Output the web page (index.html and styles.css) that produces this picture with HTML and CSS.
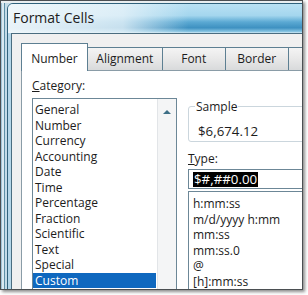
FILE: index.html
```html
<!DOCTYPE html>
<html lang="en">
<head>
    <meta charset="UTF-8">
    <meta name="viewport" content="width=device-width, initial-scale=1.0">
    <title>Format Cells</title>
    <link rel="stylesheet" href="styles.css">
</head>
<body>
    <div class="shot">
        <div class="window">
            <div class="title-bar">Format Cells</div>
            <div class="client">
                <ul class="tabs">
                    <li class="tab active tab-number">Number</li>
                    <li class="tab tab-align">Alignment</li>
                    <li class="tab tab-font">Font</li>
                    <li class="tab tab-border">Border</li>
                    <li class="tab tab-fill"></li>
                </ul>
                <div class="panel">
                    <!-- Category list -->
                    <div class="category">
                        <div class="label"><u>C</u>ategory:</div>
                        <div class="listbox">
                            <ul class="items">
                                <li>General</li>
                                <li>Number</li>
                                <li>Currency</li>
                                <li>Accounting</li>
                                <li>Date</li>
                                <li>Time</li>
                                <li>Percentage</li>
                                <li>Fraction</li>
                                <li>Scientific</li>
                                <li>Text</li>
                                <li>Special</li>
                                <li class="selected">Custom</li>
                            </ul>
                            <div class="scrollbar"><span class="arrow-up"></span></div>
                        </div>
                    </div>

                    <!-- Sample and type -->
                    <div class="format">
                        <fieldset class="sample">
                            <legend>Sample</legend>
                            <div class="sample-value">$6,674.12</div>
                        </fieldset>
                        <div class="label type-label"><u>T</u>ype:</div>
                        <div class="type-input"><span class="selected-text">$#,##0.00</span></div>
                        <ul class="type-list">
                            <li>h:mm:ss</li>
                            <li>m/d/yyyy h:mm</li>
                            <li>mm:ss</li>
                            <li>mm:ss.0</li>
                            <li>@</li>
                            <li>[h]:mm:ss</li>
                        </ul>
                    </div>
                </div>
            </div>
        </div>
    </div>
</body>
</html>
```

FILE: styles.css
```css
/* General */
* {
    box-sizing: border-box;
}

body {
    margin: 0;
    width: 308px;
    height: 295px;
    overflow: hidden;
    background-color: #fff;
    font-family: "Open Sans", "Liberation Sans", sans-serif;
    font-size: 12px;
    color: #1c1c1c;
}

ul {
    list-style: none;
    margin: 0;
    padding: 0;
}

/* Screenshot frame */
.shot {
    width: 303px;
    height: 290px;
    border: 1px solid #4b4f52;
    overflow: hidden;
    box-shadow: 2px 2px 3px rgba(0, 0, 0, 0.45);
    padding: 2px 0 0 6px;
    background:
        linear-gradient(to bottom, #e9eef0 0, #e9eef0 2px, transparent 2px),
        linear-gradient(to right, #9fc3d6 0, #9fc3d6 1px, #d9e9f1 1px, #d9e9f1 3px, #5d8fa6 3px, #5d8fa6 4px, #c3dbe7 4px);
}

/* Dialog window */
.window {
    width: 330px;
    height: 330px;
    border: 1px solid #2f627c;
    border-radius: 6px 6px 0 0;
    padding: 0 3px;
    background-color: #b4d6e8;
    display: flex;
    flex-direction: column;
}

.title-bar {
    height: 29px;
    line-height: 28px;
    margin: 0 -3px;
    padding-left: 5px;
    font-size: 14px;
    color: #202020;
    border-radius: 5px 5px 0 0;
    background:
        linear-gradient(to right, rgba(242, 248, 251, 0.95) 0, rgba(232, 243, 249, 0.8) 35%, rgba(220, 238, 247, 0) 55%),
        linear-gradient(to bottom, #b9e1f3 0, #a4d6ee 40%, #5ba9d3 62%, #3e91c1 82%, #86c4e2 95%, #d3eaf5 100%);
}

.client {
    flex: 1;
    border: 1px solid #4a6d80;
    background-color: #f0f0f0;
    padding: 9px 0 0 9px;
    display: flex;
    flex-direction: column;
}

/* Tabs */
.tabs {
    display: flex;
    align-items: flex-end;
    height: 27px;
}

.tab {
    height: 23px;
    line-height: 21px;
    text-align: center;
    border: 1px solid #5d7f92;
    border-bottom: none;
    margin-left: -1px;
    background: linear-gradient(to bottom, #f4f4f4 0, #e8e8e8 50%, #d8dadb 100%);
}

.tab.active {
    height: 28px;
    margin-left: 0;
    margin-bottom: -1px;
    padding-top: 4px;
    background: #fff;
    position: relative;
}

.tab-number { width: 68px; }
.tab-align { width: 77px; }
.tab-font { width: 65px; }
.tab-border { width: 65px; }
.tab-fill { width: 45px; }

/* Tab panel */
.panel {
    flex: 1;
    border: 1px solid #8a9ca7;
    background-color: #fff;
    padding: 7px 0 0 10px;
    display: flex;
    gap: 11px;
}

.label {
    line-height: 15px;
}

.category {
    width: 145px;
    display: flex;
    flex-direction: column;
}

.category .label {
    margin-bottom: 5px;
}

.listbox {
    flex: 1;
    border: 1px solid #6c8797;
    display: flex;
}

.items {
    flex: 1;
    padding-top: 3px;
}

.items li {
    line-height: 15.5px;
    padding-left: 2px;
}

.items li.selected {
    background-color: #0f68bf;
    color: #fff;
    margin-right: 1px;
}

.scrollbar {
    width: 19px;
    background-color: #f4f5f6;
    border-left: 1px solid #e2e5e8;
    display: flex;
    justify-content: center;
    padding-top: 11px;
}

.arrow-up {
    width: 0;
    height: 0;
    border-left: 4px solid transparent;
    border-right: 4px solid transparent;
    border-bottom: 4px solid #3d6f86;
}

/* Right column */
.format {
    flex: 1;
    padding-top: 21px;
    display: flex;
    flex-direction: column;
}

.sample {
    margin: 0;
    padding: 0 0 2px 6px;
    border: 1px solid #cbd6dd;
    border-radius: 3px;
}

.sample legend {
    padding: 0 1px;
    line-height: 15px;
}

.sample-value {
    margin: 10px 0 0 3px;
    line-height: 15px;
    font-size: 13.3px;
}

.type-label {
    margin-top: 9px;
}

.type-input {
    margin-top: 3px;
    height: 20px;
    border: 1px solid #6c8797;
    padding: 1px 0 0 4px;
}

.selected-text {
    display: inline-block;
    line-height: 15px;
    padding: 0 1px;
    font-size: 13.3px;
    background-color: #000;
    color: #fff;
}

.type-list {
    flex: 1;
    margin-top: 2px;
    border: 1px solid #6c8797;
    padding: 4px 0 0 4px;
}

.type-list li {
    line-height: 15.5px;
}
```
